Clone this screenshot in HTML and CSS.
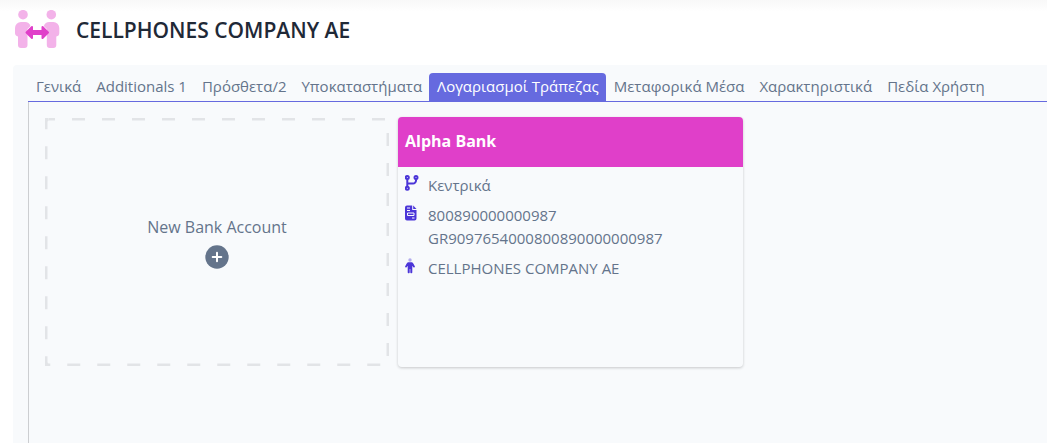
FILE: index.html
```html
<!DOCTYPE html>
<html lang="el">
<head>
  <meta charset="UTF-8" />
  <meta name="viewport" content="width=device-width, initial-scale=1.0" />
  <title>CELLPHONES COMPANY AE</title>
  <link rel="stylesheet" href="styles.css">
</head>
<body>
  <header class="page-header">
    <svg class="logo" viewBox="0 0 45 39" aria-hidden="true">
      <g class="people">
        <circle cx="8" cy="4.700" r="4.800" />
        <path d="M6 12h4a6 6 0 0 1 5.500 4L12.500 19v16a3 3 0 0 1-3 3H6a3 3 0 0 1-3-3v-8.500A3.500 3.500 0 0 1 0 23v-5a6 6 0 0 1 6-6z" />
        <circle cx="36.300" cy="4.700" r="4.800" />
        <path d="M38.300 12h-4a6 6 0 0 0-5.500 4L31.800 19v16a3 3 0 0 0 3 3h3.500a3 3 0 0 0 3-3v-8.500a3.500 3.500 0 0 0 3-3.500v-5a6 6 0 0 0-6-6z" />
      </g>
      <path class="arrow" d="M11.500 22.500l5.500-5.500v4h10.500v-4l5.500 5.500-5.500 5.500v-4H17v4z" />
    </svg>
    <h1>CELLPHONES COMPANY AE</h1>
  </header>

  <main class="panel">
    <nav class="tabs">
      <a class="tab" href="#general">Γενικά</a>
      <a class="tab" href="#additionals">Additionals 1</a>
      <a class="tab" href="#extra">Πρόσθετα/2</a>
      <a class="tab" href="#branches">Υποκαταστήματα</a>
      <a class="tab active" href="#accounts" aria-current="page">Λογαριασμοί Τράπεζας</a>
      <a class="tab" href="#transport">Μεταφορικά Μέσα</a>
      <a class="tab" href="#features">Χαρακτηριστικά</a>
      <a class="tab" href="#fields">Πεδία Χρήστη</a>
    </nav>

    <section class="accounts" id="accounts">
      <button class="new-account" type="button">
        <svg class="dashes" aria-hidden="true">
          <rect width="100%" height="100%" rx="4" />
        </svg>
        <span>New Bank Account</span>
        <svg class="plus" viewBox="0 0 24 24" aria-hidden="true">
          <circle cx="12" cy="12" r="11.700" />
          <path d="M12 7.700v8.600M7.700 12h8.600" />
        </svg>
      </button>

      <article class="card">
        <h2>Alpha Bank</h2>
        <ul>
          <li>
            <svg class="icon" viewBox="0 0 14 16" aria-hidden="true">
              <g class="line">
                <circle cx="2.300" cy="2.500" r="1.500" />
                <circle cx="11" cy="2.500" r="1.500" />
                <circle cx="2.300" cy="13.200" r="1.500" />
                <path d="M2.300 4.200v7.400M11 4.200v1.300a3 3 0 0 1-3 3H2.300" />
              </g>
            </svg>
            <div>Κεντρικά</div>
          </li>
          <li>
            <svg class="icon" viewBox="0 0 14 16" aria-hidden="true">
              <path d="M2 .5h5.200V5h4.300v8.500a2 2 0 0 1-2 2H2a2 2 0 0 1-2-2v-11a2 2 0 0 1 2-2z" />
              <path d="M8.200.5l3.300 3.500H8.200z" />
              <path class="cut" d="M2 3h3M2 5.500h3M7 13h2.500M2.500 8h6.500v2.500H2.500z" />
            </svg>
            <div>800890000000987<br>GR9097654000800890000000987</div>
          </li>
          <li>
            <svg class="icon" viewBox="0 0 14 16" aria-hidden="true">
              <circle class="head" cx="5" cy="2" r="1.700" />
              <path d="M3.800 4.300h2.400c1 0 1.600.5 2.100 1.300l1.500 2.700c.5 1-.8 1.700-1.400.9L7.300 7.800v6.400c0 1.500-2 1.500-2 0V11h-.6v3.200c0 1.500-2 1.500-2 0V7.800L1.600 9.200C1 10-.3 9.300.2 8.300l1.500-2.700c.5-.8 1.100-1.300 2.100-1.300z" />
            </svg>
            <div>CELLPHONES COMPANY AE</div>
          </li>
        </ul>
      </article>
    </section>
  </main>
</body>
</html>
```

FILE: styles.css
```css
* {
  margin: 0;
  padding: 0;
  box-sizing: border-box;
}

body {
  display: flex;
  flex-direction: column;
  min-height: 100vh;
  font-family: 'Open Sans', 'Noto Sans', sans-serif;
  font-size: 15px;
  line-height: 23px;
  background: #fff;
  color: #64748b;
}

/* Header */
.page-header {
  display: flex;
  align-items: center;
  gap: 16px;
  height: 65px;
  padding: 0 15px 6px;
  background: linear-gradient(#f8f8f8, #fff 12px);
}

.logo {
  width: 45px;
  height: 39px;
}

.logo .people {
  fill: #f3b2e9;
}

.logo .arrow {
  fill: #e03fc9;
  stroke: #e03fc9;
  stroke-width: 2;
  stroke-linejoin: round;
}

h1 {
  font-size: 21px;
  font-weight: 600;
  line-height: 30px;
  color: #1f2937;
}

/* Tabs */
.panel {
  display: flex;
  flex-direction: column;
  flex-grow: 1;
  margin-left: 13px;
  padding: 8px 0 0 15px;
  background: #f8fafc;
  border-top-left-radius: 4px;
}

.tabs {
  display: flex;
  border-bottom: 1px solid #666adf;
}

.tab {
  padding: 2px 7px 3px 8px;
  color: inherit;
  text-decoration: none;
  white-space: nowrap;
}

.tab.active {
  background: #666adf;
  border-radius: 4px 4px 0 0;
  color: #fff;
}

/* Accounts */
.accounts {
  display: grid;
  grid-template-columns: repeat(auto-fill, 345px);
  grid-auto-rows: 250px;
  gap: 8px;
  flex-grow: 1;
  padding: 15px 16px;
  border-left: 1px solid #ccced1;
}

.new-account {
  position: relative;
  display: flex;
  flex-direction: column;
  align-items: center;
  justify-content: center;
  gap: 6px;
  margin: 1px 1px 1px 0;
  border: none;
  background: none;
  color: inherit;
  font: inherit;
  font-size: 16px;
  cursor: pointer;
}

.dashes {
  position: absolute;
  inset: 0;
  width: 100%;
  height: 100%;
}

.dashes rect {
  fill: none;
  stroke: #e2e4e7;
  stroke-width: 5;
  stroke-dasharray: 13 17;
  stroke-dashoffset: 7;
}

.plus {
  width: 24px;
  height: 24px;
  fill: #64748b;
}

.plus path {
  stroke: #fff;
  stroke-width: 2;
  stroke-linecap: round;
}

.card {
  border-radius: 4px;
  box-shadow: 0 1px 3px rgba(0, 0, 0, 0.2);
  overflow: hidden;
}

.card h2 {
  padding: 12px 7px 14px;
  background: #e03fc9;
  color: #fff;
  font-size: 16px;
  font-weight: 700;
  line-height: 24px;
}

.card ul {
  display: grid;
  gap: 7px;
  padding: 7px;
  list-style: none;
}

.card li {
  display: flex;
  gap: 9px;
}

.icon {
  flex-shrink: 0;
  width: 14px;
  height: 16px;
  margin-top: 1px;
  fill: #4b35d8;
}

.icon .line {
  fill: none;
  stroke: #4b35d8;
  stroke-width: 2;
}

.icon .cut {
  fill: none;
  stroke: #f8fafc;
}

.icon .head {
  opacity: 0.4;
}
```
